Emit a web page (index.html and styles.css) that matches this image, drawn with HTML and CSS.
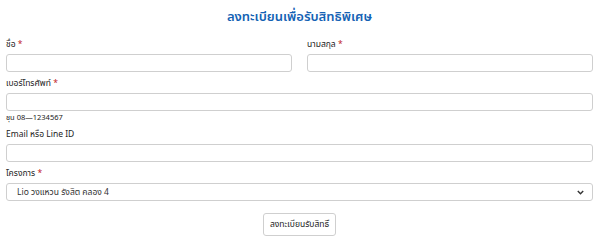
FILE: index.html
```html
<!DOCTYPE html>
<html lang="th">
<head>
<meta charset="utf-8">
<link rel="stylesheet" href="styles.css">
</head>
<body>
<form class="form">
  <h1 class="title">ลงทะเบียนเพื่อรับสิทธิพิเศษ</h1>
  <div class="row">
    <div class="field">
      <label class="label">ชื่อ <span class="req">*</span></label>
      <input class="input" type="text">
    </div>
    <div class="field">
      <label class="label">นามสกุล <span class="req">*</span></label>
      <input class="input" type="text">
    </div>
  </div>
  <div class="field">
    <label class="label">เบอร์โทรศัพท์ <span class="req">*</span></label>
    <input class="input" type="text">
    <div class="hint">ชุน 08—1234567</div>
  </div>
  <div class="field">
    <label class="label">Email หรือ Line ID</label>
    <input class="input" type="text">
  </div>
  <div class="field">
    <label class="label">โครงการ <span class="req">*</span></label>
    <div class="select">
      <span>Lio วงแหวน รังสิต คลอง 4</span>
      <svg class="chev" width="7" height="5" viewBox="0 0 7 5"><path d="M0.8 1 L3.5 3.8 L6.2 1" fill="none" stroke="#333" stroke-width="1.4"/></svg>
    </div>
  </div>
  <div class="actions">
    <button class="btn" type="button">ลงทะเบียนรับสิทธิ์</button>
  </div>
</form>
</body>
</html>
```
FILE: styles.css
```css
* { box-sizing: border-box; }
html, body { margin: 0; background: #fff; }
body {
  font-family: "Noto Sans Thai", "Noto Sans", "DejaVu Sans", sans-serif;
  color: #222;
  font-size: 8.5px;
}
.form {
  padding: 6px 7px 0 6px;
  display: flex;
  flex-direction: column;
}
.title {
  margin: 0 0 11px;
  text-align: center;
  color: #1462b4;
  font-size: 13px;
  font-weight: 600;
  line-height: 22px;
}
.row {
  display: flex;
  gap: 15px;
}
.row .field { flex: 1; }
.field {
  display: flex;
  flex-direction: column;
  margin-bottom: 6px;
}
.label {
  line-height: 12px;
  margin-bottom: 3px;
  font-size: 8.5px;
}
.req { color: #c0161c; }
.input, .select {
  height: 18px;
  border: 1px solid #cfcfcf;
  border-radius: 3px;
  background: #fff;
  width: 100%;
  margin: 0;
}
.hint {
  font-size: 7.5px;
  line-height: 10px;
  margin-top: 2px;
}
.select {
  display: flex;
  align-items: center;
  justify-content: space-between;
  padding: 0 8px 0 10px;
  font-size: 8.5px;
  color: #333;
}
.chev { display: block; }
.actions {
  display: flex;
  justify-content: center;
  margin-top: 6px;
}
.btn {
  font-family: inherit;
  font-size: 8.5px;
  height: 23px;
  padding: 0 6px;
  background: #fff;
  border: 1px solid #cfcfcf;
  border-radius: 3px;
  color: #222;
}
```
